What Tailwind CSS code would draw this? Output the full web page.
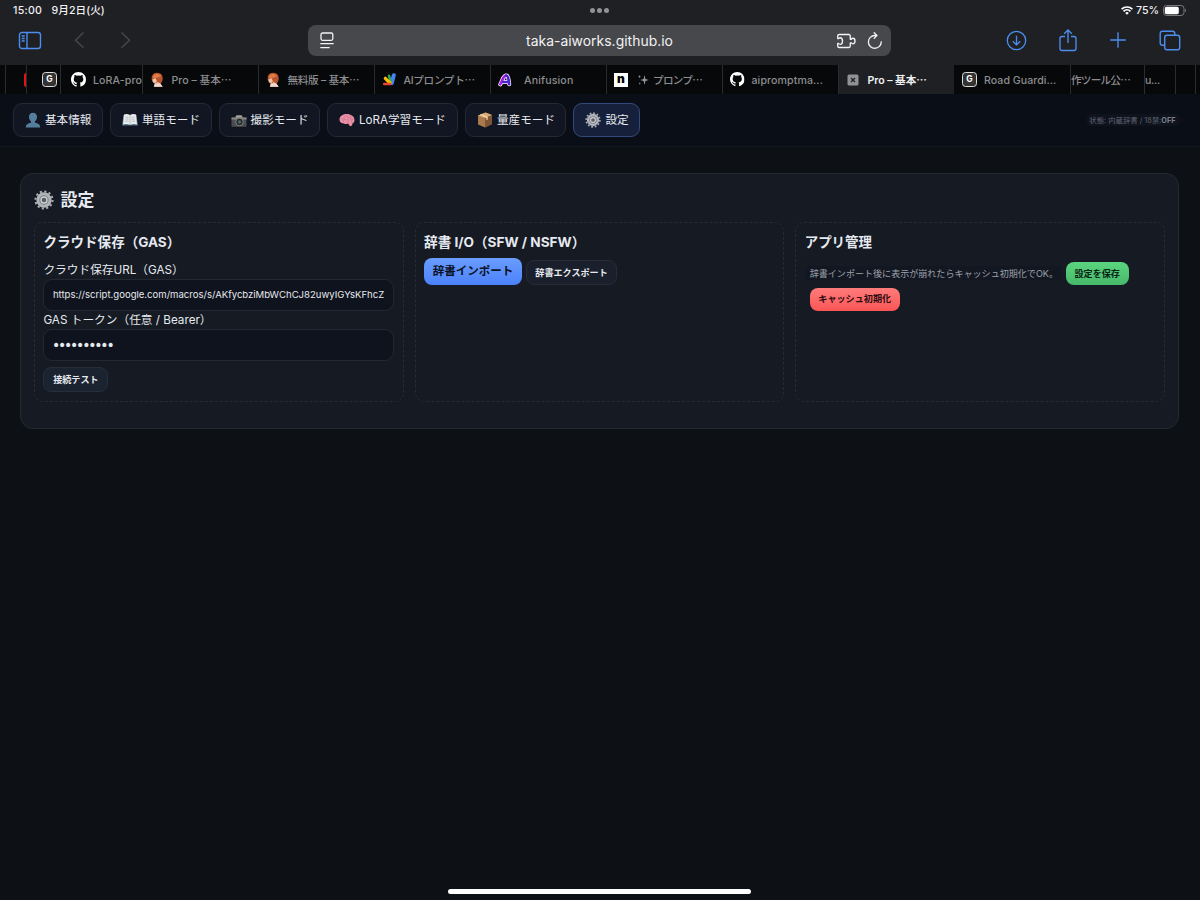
<!DOCTYPE html>
<html lang="ja">
<head>
  <meta charset="UTF-8" />
  <meta name="viewport" content="width=device-width, initial-scale=1.0" />
  <title>Pro – 基本情報</title>
  <script src="https://cdn.jsdelivr.net/npm/@tailwindcss/browser@4"></script>
</head>
<body class="w-[1200px] h-[900px] overflow-hidden flex flex-col bg-[#0d1014] text-[#e6e9ef] font-['Inter','Noto_Sans_CJK_JP',sans-serif]">

  <!-- Iconos compartidos -->
  <svg class="hidden">
    <symbol id="gear" viewBox="0 0 24 24">
      <circle cx="12" cy="12" r="10.3" fill="none" stroke="#a9adb2" stroke-width="2.4" stroke-dasharray="2.6 2.793" />
      <circle cx="12" cy="12" r="7.4" fill="#777b80" stroke="#b0b4b8" stroke-width="3.6" />
      <circle cx="12" cy="12" r="3.600" fill="#5a5e64" stroke="#cdd0d3" stroke-width="1.6" />
    </symbol>
    <symbol id="github" viewBox="0 0 16 16">
      <path fill="#fff" d="M8 0C3.58 0 0 3.58 0 8c0 3.54 2.29 6.53 5.47 7.59.4.07.55-.17.55-.38 0-.19-.01-.82-.01-1.49-2.01.37-2.53-.49-2.69-.94-.09-.23-.48-.94-.82-1.13-.28-.15-.68-.52-.01-.53.63-.01 1.08.58 1.23.82.72 1.21 1.87.87 2.33.66.07-.52.28-.87.51-1.07-1.78-.2-3.64-.89-3.64-3.95 0-.87.31-1.59.82-2.15-.08-.2-.36-1.02.08-2.12 0 0 .67-.21 2.2.82a7.6 7.6 0 0 1 4 0c1.53-1.04 2.2-.82 2.2-.82.44 1.1.16 1.92.08 2.12.51.56.82 1.27.82 2.15 0 3.07-1.87 3.75-3.65 3.95.29.25.54.73.54 1.48 0 1.07-.01 1.93-.01 2.2 0 .21.15.46.55.38A8 8 0 0 0 16 8c0-4.42-3.58-8-8-8" />
    </symbol>
    <symbol id="girl" viewBox="0 0 14 16">
      <path d="M4.500 9h5v3l3 3.700H3z" fill="#e9bfab" />
      <path d="M1 9C0 4 2 .6 6.500.6c4.500 0 6.400 3 6.100 6.500-.2 2.400-1 4.200-2.600 5.400L7 10.500 5.500 12 3 11.500z" fill="#b9532c" />
      <path d="M1.800 6c.4-3 2.600-4.300 4.800-4 2 .2 3.600 1 4.300 2.600L5.600 6.500z" fill="#de7c48" />
      <path d="M1.500 8l3.200-1.500 1.600 3L4.500 12 2 11z" fill="#efc3a8" />
      <path d="M4.500 12.800l5.500-.8 2.500 3.700H3.500z" fill="#f0d6cc" />
    </symbol>
  </svg>

  <!-- Barra de estado -->
  <div class="h-5 shrink-0 bg-[#1f2024] grid grid-cols-3 items-center pl-[13px] pr-[13px] text-[10.6px] font-medium text-[#f1f1f3]">
    <div class="flex gap-[9.500px] leading-5 whitespace-pre pt-px"><span class="tracking-[.25px]">15:00</span><span class="tracking-[.05px]">9月2日(火)</span></div>
    <div class="flex justify-center gap-[2px]">
      <span class="size-[5px] rounded-full bg-[#929296]"></span>
      <span class="size-[5px] rounded-full bg-[#929296]"></span>
      <span class="size-[5px] rounded-full bg-[#929296]"></span>
    </div>
    <div class="flex justify-end items-center">
      <svg class="w-[12px] h-[9px] mr-[3px]" viewBox="0 0 12 9" fill="none" stroke="#fff" stroke-width="1.700"><path d="M.6 3.200a7.700 7.700 0 0 1 10.800 0M2.500 5.300a5 5 0 0 1 7 0" /><path d="M6 8.800L4.200 7a2.500 2.500 0 0 1 3.600 0z" fill="#fff" stroke="none" /></svg>
      <span class="leading-5 pt-px mr-[4px]">75%</span>
      <svg class="w-[24px] h-[11px]" viewBox="0 0 24 11"><rect x=".5" y=".5" width="20.500" height="10" rx="3" fill="none" stroke="#77787b" /><rect x="1.800" y="1.800" width="14" height="7.400" rx="1.800" fill="#fff" /><path d="M22 3.800c1.300.4 1.300 3 0 3.400z" fill="#77787b" /></svg>
    </div>
  </div>

  <!-- Barra del navegador -->
  <div class="h-[45px] shrink-0 bg-[#1f2024] flex items-start pl-[18px] pr-[19px]">
    <div class="w-[290px] flex pt-[11px] text-[#4c8df0]">
      <svg class="w-6 h-[19px]" viewBox="0 0 24 19" fill="none" stroke="currentColor" stroke-width="1.400"><rect x="1.500" y="1.500" width="21" height="16" rx="2.500" /><path d="M9 1.500v16M3.700 5h3M3.700 7.500h3M3.700 10h3" /></svg>
      <svg class="w-[11px] h-[18px] ml-[32px]" viewBox="0 0 11 18" fill="none" stroke="#47484c" stroke-width="1.400"><path d="M9.500 1.500L1.500 9.200l8 7.500" /></svg>
      <svg class="w-[11px] h-[18px] ml-[34.500px]" viewBox="0 0 11 18" fill="none" stroke="#47484c" stroke-width="1.400"><path d="M1.500 1.500l8 7.700-8 7.500" /></svg>
    </div>
    <div class="w-[583px] h-[31px] mt-[5px] rounded-[8px] bg-[#47484b] flex items-center text-[#f2f2f4]">
      <svg class="w-[14px] h-[17px] ml-[12px]" viewBox="0 0 14 17" fill="none" stroke="currentColor" stroke-width="1.300" stroke-linecap="round"><rect x="1" y="1" width="11.800" height="7.300" rx="1.500" /><path d="M.8 11.700h12.400M.8 15.600h8.400" /></svg>
      <span class="flex-1 text-center text-[13.900px] pl-[29px] pt-px leading-[30px] tracking-[.03px]">taka-aiworks.github.io</span>
      <svg class="w-[20px] h-[16px] mr-[11px]" viewBox="0 0 20 16" fill="none" stroke="currentColor" stroke-width="1.350" stroke-linejoin="round"><path d="M1.700 5V3A1.500 1.500 0 0 1 3.200 1.500h9.600A1.500 1.500 0 0 1 14.300 3v3.200h1.100c.3-.7.800-1 1.500-1 1.200 0 2.100 1.200 2.100 2.800s-.9 2.800-2.100 2.800c-.7 0-1.200-.3-1.500-1h-1.100V13a1.500 1.500 0 0 1-1.500 1.500H3.200A1.500 1.500 0 0 1 1.700 13v-2.500h1.100c.4.600.9.800 1.500.8 1.300 0 2.200-1.500 2.200-3.300S5.600 4.700 4.300 4.700c-.6 0-1.100.1-1.500.8H1.700z" /></svg>
      <svg class="w-[16px] h-[18px] mr-[8px]" viewBox="0 0 16 18" fill="none" stroke="currentColor" stroke-width="1.350" stroke-linecap="round"><path d="M14.200 9.800A6.400 6.400 0 1 1 7.800 3.500h1.800M7.200.8l2.700 2.700-2.700 2.900" /></svg>
    </div>
    <div class="flex-1 flex justify-end items-start pt-[10px] text-[#4c8df0]">
      <svg class="size-[21px]" viewBox="0 0 21 21" fill="none" stroke="currentColor" stroke-width="1.300"><circle cx="10.500" cy="10.500" r="9.200" /><path d="M10.500 5.700v9M6.800 11.200l3.700 3.700 3.700-3.700" /></svg>
      <svg class="w-[18px] h-[23px] ml-[32px] -mt-px" viewBox="0 0 18 23" fill="none" stroke="currentColor" stroke-width="1.350"><path d="M6 7.500H3A2 2 0 0 0 1 9.500v10a2 2 0 0 0 2 2h12a2 2 0 0 0 2-2v-10a2 2 0 0 0-2-2h-3M9 14V1.300M5.200 4.800L9 1l3.800 3.800" /></svg>
      <svg class="w-[16px] h-[16px] ml-[33px] mt-[2px]" viewBox="0 0 16 16" fill="none" stroke="currentColor" stroke-width="1.350"><path d="M8 .3v15.400M.3 8h15.400" /></svg>
      <svg class="w-[22px] h-[21px] ml-[33px]" viewBox="0 0 22 21" fill="none" stroke="currentColor" stroke-width="1.400"><path d="M5.700 15.300H3.500a2.300 2.300 0 0 1-2.300-2.300V3.500a2.300 2.300 0 0 1 2.300-2.300h10a2.300 2.300 0 0 1 2.300 2.300v1.700" /><rect x="5.700" y="5.200" width="15" height="14.500" rx="2.300" /></svg>
    </div>
  </div>

  <!-- Pestañas -->
  <div class="h-[29px] shrink-0 flex bg-[#07080a] text-[10.600px] font-medium text-[#8d8d90] tracking-[.2px] leading-[29px] whitespace-nowrap">
    <div class="w-[6px] shrink-0 border-r border-[#2b2c2f]"></div>
    <div class="w-[21px] shrink-0 border-r border-[#2b2c2f] flex items-center justify-end"><span class="w-[2px] h-[14px] bg-[#e31212] rounded-l"></span></div>
    <div class="w-[34px] shrink-0 border-r border-[#2b2c2f] flex items-center pl-[15px]"><span class="size-[15px] rounded-[3.500px] border-[1.500px] border-[#dcdcdc] bg-[#333] text-white text-[8.500px] font-bold leading-[13px] text-center tracking-normal">G</span></div>
    <div class="w-[82px] shrink-0 border-r border-[#2b2c2f] flex items-center pl-[10px] overflow-hidden"><svg class="size-[15px] shrink-0 mr-[7px]"><use href="#github" /></svg><span class="pt-[2px] tracking-[.1px]">LoRA-pro</span></div>
    <div class="w-[116px] shrink-0 border-r border-[#2b2c2f] flex items-center pl-[8px]"><svg class="w-[13px] h-[15px] mr-[7.500px]"><use href="#girl" /></svg><span class="pt-[2px] tracking-[0px]">Pro – 基本⋯</span></div>
    <div class="w-[116px] shrink-0 border-r border-[#2b2c2f] flex items-center pl-[8px]"><svg class="w-[13px] h-[15px] mr-[7.500px]"><use href="#girl" /></svg><span class="pt-[2px] tracking-[-.3px]">無料版 – 基本⋯</span></div>
    <div class="w-[116px] shrink-0 border-r border-[#2b2c2f] flex items-center pl-[7px]">
      <svg class="w-[15px] h-[13px] mr-[6.500px]" viewBox="0 0 15 13" stroke-linecap="round"><path d="M11.800 2.300L9.800 10" stroke="#4285f4" stroke-width="4" /><path d="M7 2.800L8.800 9" stroke="#34a853" stroke-width="2.600" /><path d="M3.300 5.300L8 10" stroke="#fbbc04" stroke-width="3.200" /><path d="M2.200 11h6" stroke="#ea4335" stroke-width="2.600" /></svg>
      <span class="pt-[2px] tracking-[-.3px]">AIプロンプト⋯</span>
    </div>
    <div class="w-[116px] shrink-0 border-r border-[#2b2c2f] flex items-center pl-[7px]">
      <svg class="w-[14px] h-[14px] mr-[12px]" viewBox="0 0 14 14" fill="none" stroke-linecap="round" stroke-linejoin="round"><path d="M2.300 11.300C4.500 8 4.500 3.500 8 2.500c2-.3 2.600 3 3.200 8.800M4.800 9h5" stroke="#fff" stroke-width="4" /><path d="M2.300 11.300C4.500 8 4.500 3.500 8 2.500" stroke="#a81be0" stroke-width="2.600" /><path d="M8 2.500c2-.3 2.600 3 3.200 8.800M5 9h5" stroke="#4a22d0" stroke-width="2.600" /></svg>
      <span class="pt-[2px] tracking-[.15px]">Anifusion</span>
    </div>
    <div class="w-[116px] shrink-0 border-r border-[#2b2c2f] flex items-center pl-[7px]">
      <span class="size-[14px] bg-white flex items-center justify-center text-black text-[12px] font-black leading-[14px] pb-[1.500px] tracking-normal mr-[9px]">n</span>
      <svg class="w-[12px] h-[12px] mr-[4px]" viewBox="0 0 12 12" fill="#9a9a9d"><path d="M7.500 1l.9 4 3.300 1-3.300 1-.9 4-.9-4-3.300-1 3.300-1zM2.500.8l.4 1.500 1.400.4-1.400.4-.4 1.500-.4-1.500L.7 2.700l1.400-.4zM2.800 8l.3 1.200 1.200.3-1.200.3L2.800 11l-.3-1.200-1.200-.3 1.200-.3z" /></svg>
      <span class="pt-[2px] tracking-[-.7px]">プロンプ⋯</span>
    </div>
    <div class="w-[116px] shrink-0 border-r border-[#2b2c2f] flex items-center pl-[7px]"><svg class="size-[14.500px] mr-[7px]"><use href="#github" /></svg><span class="pt-[2px] tracking-[.1px]">aipromptma...</span></div>
    <div class="w-[115px] shrink-0 bg-[#1f2024] text-[#f0f0f2] font-semibold flex items-center pl-[8px]">
      <svg class="size-[12px] mr-[8.500px]" viewBox="0 0 12 12"><rect x=".5" y=".5" width="11" height="11" rx="1.500" fill="#929295" /><path d="M4 4l4 4M8 4l-4 4" stroke="#232427" stroke-width="1.400" /></svg>
      <span class="pt-[2px] tracking-[-.05px]">Pro – 基本⋯</span>
    </div>
    <div class="w-[117px] shrink-0 border-r border-[#2b2c2f] flex items-center pl-[8px]"><span class="size-[15px] rounded-[3.500px] border-[1.500px] border-[#dcdcdc] bg-[#333] text-white text-[8.500px] font-bold leading-[13px] text-center tracking-normal mr-[7px]">G</span><span class="pt-[2px] tracking-[.05px]">Road Guardi...</span></div>
    <div class="w-[74px] shrink-0 border-r border-[#2b2c2f] flex items-center"><span class="pt-[2px] tracking-[-.75px]">作ツール公⋯</span></div>
    <div class="w-[31px] shrink-0 border-r border-[#2b2c2f] flex items-center"><span class="pt-[2px] tracking-[-.3px]">u...</span></div>
    <div class="w-[20px] shrink-0 border-r border-[#2b2c2f]"></div>
  </div>

  <!-- Navegación de la app -->
  <nav class="h-[53px] shrink-0 flex items-start gap-[7px] pl-[13px] pr-[20px] pt-[8.500px] bg-[#0a0e17] border-b border-[#131720] text-[11.600px] whitespace-nowrap">
    <button class="w-[90px] h-[34px] rounded-[9px] border border-[#242935] bg-[#111622] flex items-center pl-[11px] gap-[4px]">
      <svg class="size-[16px]" viewBox="0 0 16 16" fill="#557d9c"><path d="M8 .7c2.600 0 4 1.800 4 4.200S10.500 10 8 10 4 7.300 4 4.900 5.400.7 8 .7M.8 15.500c0-3 2-4 5.200-4.700V8h4v2.800c3.200.7 5.200 1.700 5.200 4.700z" /></svg><span class="pt-[2px]">基本情報</span>
    </button>
    <button class="w-[101.500px] h-[34px] rounded-[9px] border border-[#242935] bg-[#111622] flex items-center pl-[11px] gap-[4px]">
      <svg class="w-[16px] h-[14px]" viewBox="0 0 16 14"><path d="M1.500 2L0 12.500h16L14.500 2z" fill="#537187" /><path d="M2 1.500q3-1 6 .5 3-1.500 6-.5l1 10q-4-1-7 .5-3-1.500-7-.5z" fill="#e9ebee" /><path d="M8 2v10M3.500 4l3 .3M3.300 6l3.200.3M3 8l3.500.3M9.500 4.300l3-.3M9.500 6.300l3.200-.3M9.500 8.300L13 8" stroke="#a6abb3" stroke-width=".7" /></svg><span class="pt-[2px]">単語モード</span>
    </button>
    <button class="w-[101.500px] h-[34px] rounded-[9px] border border-[#242935] bg-[#111622] flex items-center pl-[11px] gap-[4px]">
      <svg class="w-[16px] h-[14px] mt-[2px]" viewBox="0 0 16 14"><path d="M.5 3.500h3L5.500 1h5l2 2.500h3v9.300H.5z" fill="#4b4c4d" /><path d="M.5 3.500h15v2H.5z" fill="#8b8a84" /><path d="M5.500 1.500h5l1 2h-7z" fill="#aaa9a2" /><circle cx="8.500" cy="8" r="3.800" fill="#22272b" stroke="#85857f" /><circle cx="8.500" cy="8" r="1.700" fill="#50666f" /></svg><span class="pt-[2px]">撮影モード</span>
    </button>
    <button class="w-[131px] h-[34px] rounded-[9px] border border-[#242935] bg-[#111622] flex items-center pl-[11px] gap-[4px]">
      <svg class="w-[16px] h-[14px]" viewBox="0 0 16 14"><path d="M.5 7C.2 3.500 3.500 1 7.500 1c4.500 0 8 2.500 8 6 0 2-.8 3-2 3.200.2 2-1 3-2.500 3L9 10.500c-1.500.8-3 .8-4 0C2.500 10.500.7 9 .5 7z" fill="#e890a6" /><path d="M2.500 6c2 .8 3-.8 2.800-2.500M6 1.800c1 1.700 3 1 3.500 3M7 6.500c-2-.5-3 1-2.500 2.500M9 4.800c-1 2 1 3 0 5M12 3c-1.500 1.500 1 2.500-.5 4M14.500 6c-2-.5-2 2-1.500 4" fill="none" stroke="#c96884" stroke-width=".7" /></svg><span class="pt-[2px]">LoRA学習モード</span>
    </button>
    <button class="w-[101px] h-[34px] rounded-[9px] border border-[#242935] bg-[#111622] flex items-center pl-[11px] gap-[4px]">
      <svg class="size-[16px]" viewBox="0 0 16 16"><path d="M1 3.500L8.500.5 15 3v9l-7 3.500L1 12.500z" fill="#a97a4d" /><path d="M1 3.500l7.500-3L15 3 8 6z" fill="#d7aa78" /><path d="M8 6l7-3v9l-7 3.500z" fill="#805533" /><path d="M3.500 2.500l6.500 2.700v2.500" fill="none" stroke="#ecd1a7" stroke-width="1.500" /></svg><span class="pt-[2px]">量産モード</span>
    </button>
    <button class="w-[67px] h-[34px] rounded-[9px] border border-[#34497f] bg-[#17203a] flex items-center pl-[11px] gap-[4.500px]">
      <svg class="size-[16px]"><use href="#gear" /></svg><span class="pt-[2px]">設定</span>
    </button>
    <div class="ml-auto mt-[11px] w-[93px] h-[12px] rounded bg-[#0f131e] text-[#5f6370] text-[7.350px] leading-[13px] pr-[2px] text-center">状態: 内蔵辞書 / 18禁:<b class="text-[#7b7f8a]">OFF</b></div>
  </nav>

  <!-- Ajustes -->
  <main class="mt-[26px] ml-[20px] w-[1159px] h-[256px] shrink-0 rounded-[13px] border border-[#242932] bg-[#151a23] pt-[12px] px-[13px]">
    <h1 class="h-[28px] flex items-center gap-[6.500px] text-[16.900px] font-bold"><svg class="size-[20px]"><use href="#gear" /></svg><span class="pt-[2px]">設定</span></h1>
    <div class="mt-[7.500px] grid grid-cols-3 gap-[11px]">
      <section class="h-[180px] rounded-[9px] border border-dashed border-[#262b35] pl-[8.400px] pr-[9px] pt-[9.500px]">
        <h2 class="h-[20px] leading-[20px] text-[13.550px] font-bold">クラウド保存（GAS）</h2>
        <label class="block mt-[8.500px] h-[18px] leading-[18px] text-[11.700px]">クラウド保存URL（GAS）</label>
        <input type="text" value="https://script.google.com/macros/s/AKfycbziMbWChCJ82uwyIGYsKFhcZ" class="block w-full h-[32px] rounded-[9px] border border-[#232833] bg-[#0f131d] pl-[8.500px] pr-[7px] text-[9.550px]" />
        <label class="block h-[18px] leading-[18px] text-[11.700px]">GAS トークン（任意 / Bearer）</label>
        <input type="password" value="abcdefghij" class="block w-full h-[32px] rounded-[9px] border border-[#232833] bg-[#0f131d] px-[7.500px] font-['DejaVu_Sans'] text-[14px] tracking-[-2.200px]" />
        <button class="block mt-[6px] w-[65px] h-[25px] rounded-[8px] border border-[#272e3b] bg-[#1c2330] text-[9.100px] font-semibold pt-px">接続テスト</button>
      </section>
      <section class="h-[180px] rounded-[9px] border border-dashed border-[#262b35] pl-[8.400px] pt-[9.500px]">
        <h2 class="h-[20px] leading-[20px] text-[13.600px] font-bold">辞書 I/O（SFW / NSFW）</h2>
        <div class="flex items-end gap-[4px] mt-[5.500px]">
          <button class="w-[98px] h-[27px] rounded-[8px] bg-linear-to-b from-[#6a9dff] to-[#4b82fa] text-[#0b1226] text-[11.500px] font-bold pt-[2px]">辞書インポート</button>
          <button class="w-[91px] h-[25px] rounded-[8px] border border-[#252c38] bg-[#1a202b] text-[9.100px] font-semibold pt-px">辞書エクスポート</button>
        </div>
      </section>
      <section class="h-[180px] rounded-[9px] border border-dashed border-[#262b35] pl-[8.400px] pt-[9.500px]">
        <h2 class="h-[20px] leading-[20px] text-[13.450px] font-bold">アプリ管理</h2>
        <div class="flex items-center mt-[9px] h-[24px]">
          <span class="w-[256px] h-[14px] rounded bg-[#121721] pl-[5px] text-[9.050px] leading-[15px] text-[#9da1aa] whitespace-nowrap mr-[5px]">辞書インポート後に表示が崩れたらキャッシュ初期化でOK。</span>
          <button class="w-[63px] h-[23px] rounded-[8px] bg-linear-to-b from-[#5bd57f] to-[#47b96a] text-[#0a2414] text-[9.100px] font-bold pt-px">設定を保存</button>
        </div>
        <button class="block ml-[5px] mt-[2.500px] w-[90px] h-[23px] rounded-[8px] bg-linear-to-b from-[#ff7b7b] to-[#fa5555] text-[#2b0a10] text-[9.100px] font-bold">キャッシュ初期化</button>
      </section>
    </div>
  </main>

  <!-- Indicador de inicio -->
  <div class="mt-auto mb-[6.500px] ml-[448px] w-[303px] h-[5px] shrink-0 rounded-full bg-white"></div>
</body>
</html>
